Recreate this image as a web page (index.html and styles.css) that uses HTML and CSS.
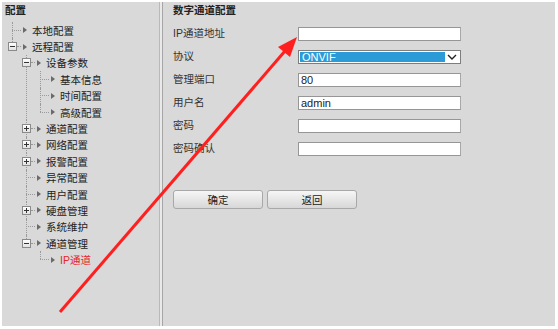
FILE: index.html
```html
<!DOCTYPE html>
<html lang="zh-CN">
<head>
  <meta charset="UTF-8" />
  <title>配置</title>
  <link rel="stylesheet" href="styles.css">
</head>
<body>
  <div class="frame">
    <div class="side">
      <div class="side-title">配置</div>
      <ul class="tree">
        <li><div class="node"><span class="joint"></span><span class="tri"></span><span class="label">本地配置</span></div></li>
        <li>
          <div class="node"><span class="box"></span><span class="dash"></span><span class="tri"></span><span class="label">远程配置</span></div>
          <ul>
            <li>
              <div class="node"><span class="box"></span><span class="dash"></span><span class="tri"></span><span class="label">设备参数</span></div>
              <ul>
                <li><div class="node"><span class="joint"></span><span class="tri"></span><span class="label">基本信息</span></div></li>
                <li><div class="node"><span class="joint"></span><span class="tri"></span><span class="label">时间配置</span></div></li>
                <li><div class="node"><span class="joint"></span><span class="tri"></span><span class="label">高级配置</span></div></li>
              </ul>
            </li>
            <li><div class="node"><span class="box plus"></span><span class="dash"></span><span class="tri"></span><span class="label">通道配置</span></div></li>
            <li><div class="node"><span class="box plus"></span><span class="dash"></span><span class="tri"></span><span class="label">网络配置</span></div></li>
            <li><div class="node"><span class="box plus"></span><span class="dash"></span><span class="tri"></span><span class="label">报警配置</span></div></li>
            <li><div class="node"><span class="joint"></span><span class="tri"></span><span class="label">异常配置</span></div></li>
            <li><div class="node"><span class="joint"></span><span class="tri"></span><span class="label">用户配置</span></div></li>
            <li><div class="node"><span class="box plus"></span><span class="dash"></span><span class="tri"></span><span class="label">硬盘管理</span></div></li>
            <li><div class="node"><span class="joint"></span><span class="tri"></span><span class="label">系统维护</span></div></li>
            <li>
              <div class="node"><span class="box"></span><span class="dash"></span><span class="tri"></span><span class="label">通道管理</span></div>
              <ul>
                <li><div class="node"><span class="joint"></span><span class="tri"></span><span class="label active">IP通道</span></div></li>
              </ul>
            </li>
          </ul>
        </li>
      </ul>
    </div>

    <div class="divider"></div>

    <div class="main">
      <div class="main-title">数字通道配置</div>
      <div class="form">
        <div class="field"><span class="field-label">IP通道地址</span><span class="input"></span></div>
        <div class="field">
          <span class="field-label">协议</span>
          <span class="select">
            <span class="sel-value">ONVIF</span>
            <span class="sel-btn">
              <svg width="10" height="6" viewBox="0 0 10 6"><path d="M1 1 L5 5 L9 1" fill="none" stroke="#222" stroke-width="1.4"/></svg>
            </span>
          </span>
        </div>
        <div class="field"><span class="field-label">管理端口</span><span class="input">80</span></div>
        <div class="field"><span class="field-label">用户名</span><span class="input">admin</span></div>
        <div class="field"><span class="field-label">密码</span><span class="input"></span></div>
        <div class="field"><span class="field-label">密码确认</span><span class="input"></span></div>
      </div>
      <div class="actions">
        <button class="btn">确定</button>
        <button class="btn">返回</button>
      </div>
    </div>
  </div>

  <svg class="arrow" width="558" height="329" viewBox="0 0 558 329">
    <line x1="60" y1="312" x2="285" y2="51" stroke="#ff1f1f" stroke-width="3"/>
    <polygon points="297,37 278,47 290,57" fill="#ff1f1f"/>
  </svg>
</body>
</html>
```

FILE: styles.css
```css
body {
  margin: 0;
  background: #fff;
  font-family: "Liberation Sans", "Noto Sans CJK SC", sans-serif;
  font-size: 10.5px;
  color: #222;
}

.frame {
  display: flex;
  margin: 2px 3px 0 2px;
  width: 553px;
  height: 324px;
  background: #d9d9d9;
}

.side {
  width: 157px;
  flex: none;
}

.side-title {
  font-weight: bold;
  line-height: 16px;
  padding-left: 3px;
  margin-bottom: 4px;
}

ul {
  list-style: none;
  margin: 0;
  padding: 0;
}

.tree {
  margin-left: 10px;
}

.tree ul {
  margin-left: 14px;
}

li {
  position: relative;
}

li::before {
  content: '';
  position: absolute;
  left: 0;
  top: 0;
  bottom: 0;
  border-left: 1px dotted #9a9a9a;
}

li:last-child::before {
  bottom: auto;
  height: 8px;
}

.node {
  display: flex;
  align-items: center;
  height: 16.4px;
}

.joint {
  width: 9px;
  border-top: 1px dotted #9a9a9a;
  flex: none;
}

.dash {
  width: 4px;
  border-top: 1px dotted #9a9a9a;
  flex: none;
}

.box {
  position: relative;
  z-index: 1;
  width: 7px;
  height: 7px;
  margin-left: -4px;
  border: 1px solid #8a8a8a;
  background: linear-gradient(#fff, #e2e2e2);
  flex: none;
  display: flex;
  align-items: center;
  justify-content: center;
}

.box::before {
  content: '';
  width: 5px;
  height: 1px;
  background: #333;
}

.box.plus::after {
  content: '';
  position: absolute;
  left: 3px;
  top: 1px;
  width: 1px;
  height: 5px;
  background: #333;
}

.tri {
  width: 0;
  height: 0;
  margin-left: 2px;
  border-left: 4px solid #6a6a6a;
  border-top: 3px solid transparent;
  border-bottom: 3px solid transparent;
  flex: none;
}

.label {
  margin-left: 5px;
  white-space: nowrap;
}

.label.active {
  color: #e8262b;
}

.divider {
  width: 2px;
  flex: none;
  background: #e9e9e9;
  border-left: 1px solid #b9b9b9;
  border-right: 1px solid #a6a6a6;
}

.main {
  flex: 1;
  padding-left: 10px;
}

.main-title {
  font-weight: bold;
  line-height: 16px;
  height: 19.5px;
}

.field {
  display: flex;
  align-items: center;
  height: 23px;
  padding-top: 2px;
  box-sizing: border-box;
}

.field-label {
  width: 125px;
  flex: none;
  color: #333;
  margin-top: -4px;
}

.input {
  width: 161px;
  height: 12px;
  border: 1px solid #969696;
  border-right-color: #a8a8a8;
  background: #fff;
  font-size: 11px;
  line-height: 12px;
  padding-left: 2px;
  box-sizing: content-box;
  width: 159px;
}

.select {
  display: flex;
  width: 163px;
  height: 14px;
  border: 1px solid #7d7d7d;
  background: #fff;
  padding: 1px;
  box-sizing: border-box;
}

.sel-value {
  flex: 1;
  background: #2b9bd7;
  color: #fff;
  font-size: 11px;
  line-height: 10px;
  padding-left: 2px;
}

.sel-btn {
  width: 14px;
  display: flex;
  align-items: center;
  justify-content: center;
}

.actions {
  display: flex;
  gap: 4px;
  margin-top: 30px;
}

.btn {
  width: 90px;
  height: 19px;
  padding: 0;
  font: inherit;
  color: #222;
  border: 1px solid #a8a8a8;
  border-radius: 3px;
  background: linear-gradient(#f6f6f6, #d7d7d7);
}

.arrow {
  position: absolute;
  left: 0;
  top: 0;
  pointer-events: none;
}
```
